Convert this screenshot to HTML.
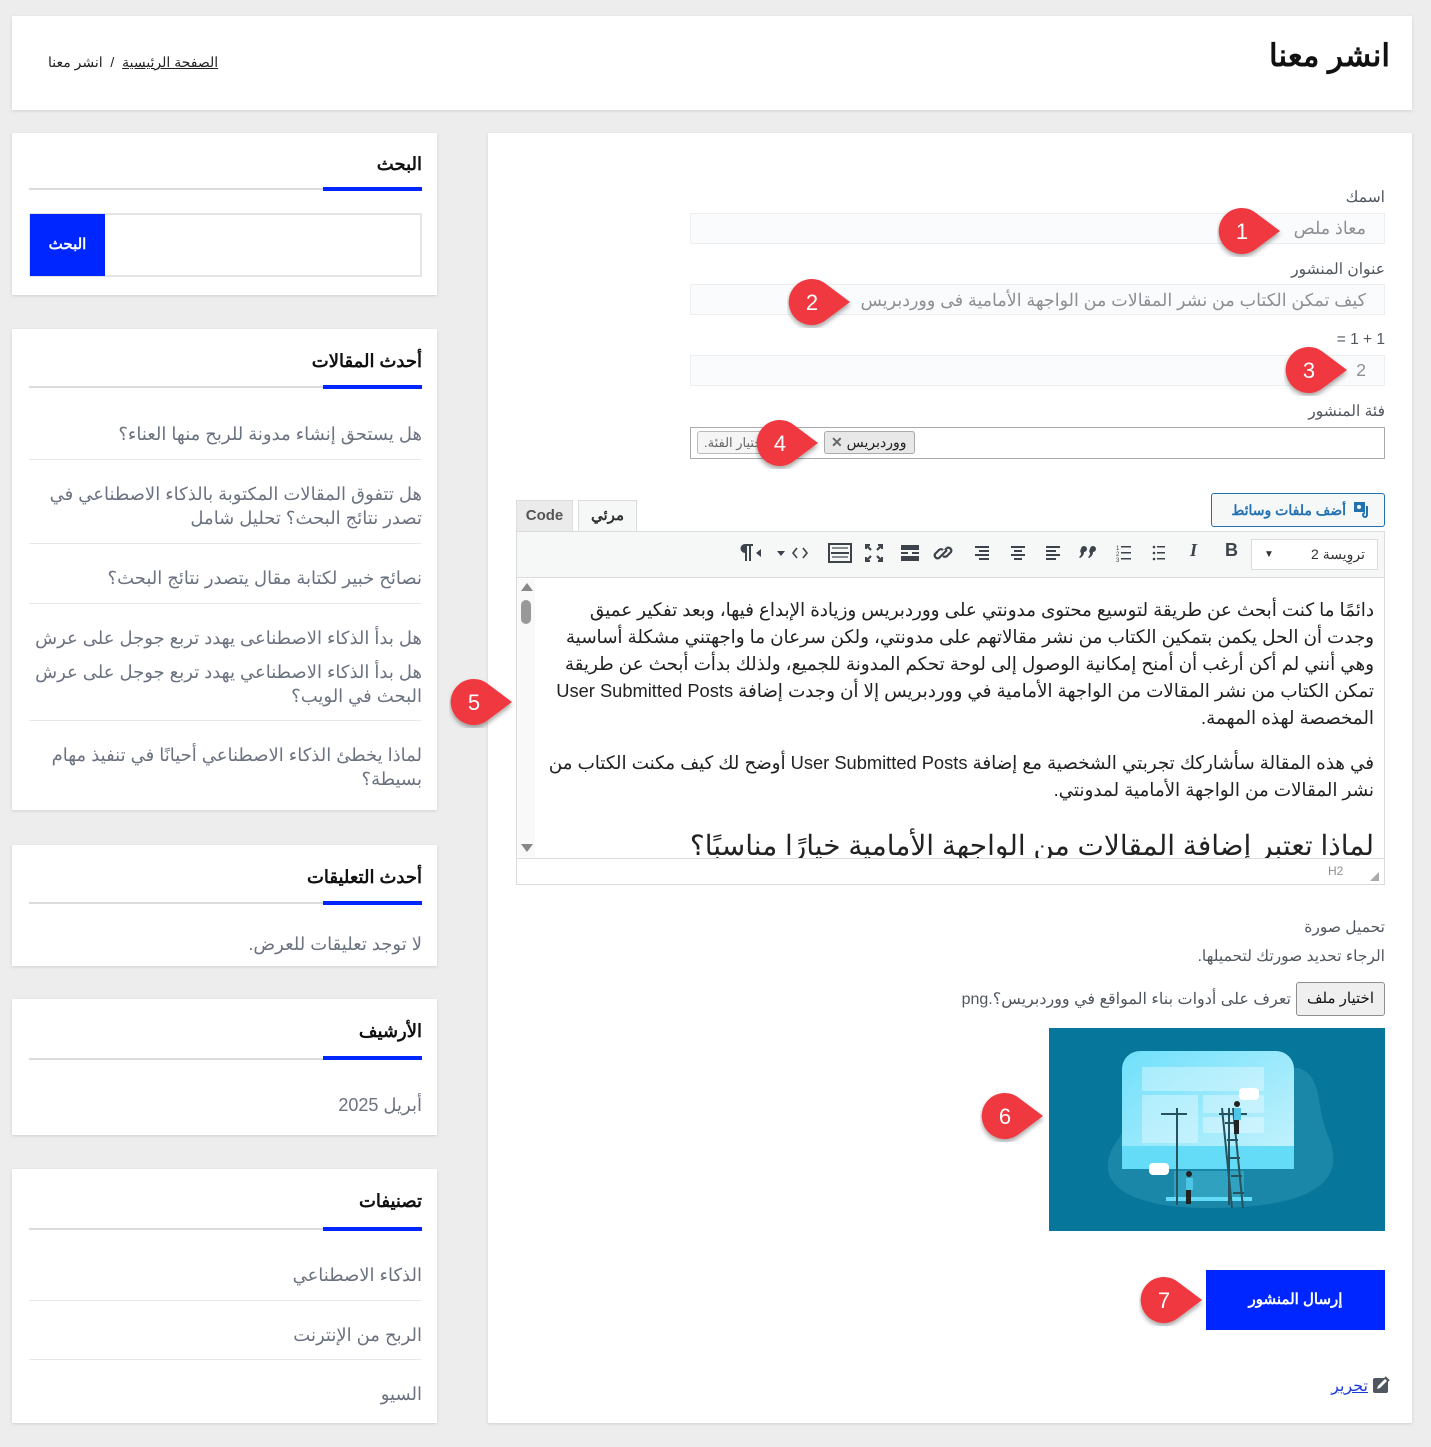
<!DOCTYPE html>
<html lang="ar"><head><meta charset="utf-8">
<style>
*{box-sizing:border-box;margin:0;padding:0}
body{width:1431px;height:1447px;background:#ededed;position:relative;overflow:hidden;font-family:"Liberation Sans","Noto Sans CJK SC",sans-serif;color:#1d2327}
.a{position:absolute}
.card{position:absolute;background:#fff;box-shadow:0 1px 3px rgba(0,0,0,.12)}
.r{position:absolute;direction:rtl;text-align:right;white-space:nowrap}
.st{font-weight:bold;font-size:18px;color:#111}
.gl{position:absolute;left:29px;width:392px;height:2px;background:#dcdcde}
.bl{position:absolute;left:311px;width:99px;height:4px;background:#0026ff}
.sep{position:absolute;left:29px;width:392px;height:1px;background:#e5e7eb}
.li{font-size:18px;color:#6b7280;line-height:24px}
.lab{font-size:15.5px;color:#50575e}
.inp{position:absolute;left:690px;width:695px;height:31px;background:#fafbfc;border:1px solid #eceef0}
.ph{font-size:17.5px;color:#8c8f94}
.badge{position:absolute;width:90px;height:52px}
.tb{position:absolute;top:540px;font-size:18px;color:#3c434a;font-weight:bold}
</style></head><body>

<div class="card" style="left:12px;top:16px;width:1400px;height:94px"></div>
<div class="r" style="right:41px;top:38px;font-size:31px;font-weight:bold;color:#111">انشر معنا</div>
<div class="r" style="left:48px;top:54px;font-size:14px;color:#222"><span style="text-decoration:underline">الصفحة الرئيسية</span>&nbsp; / &nbsp;انشر معنا</div>

<div class="card" style="left:12px;top:133px;width:425px;height:162px">
  <div class="r st" style="right:15px;top:21px">البحث</div>
  <div class="gl" style="left:17px;top:55px"></div><div class="bl" style="top:54px"></div>
  <div class="a" style="left:17px;top:80px;width:393px;height:64px;border:2px solid #e5e5e5"></div>
  <div class="a" style="left:18px;top:81px;width:75px;height:62px;background:#0026ff;color:#fff;font-weight:bold;font-size:15px;text-align:center;line-height:62px">البحث</div>
</div>

<div class="card" style="left:12px;top:329px;width:425px;height:481px">
  <div class="r st" style="right:15px;top:22px">أحدث المقالات</div>
  <div class="gl" style="left:17px;top:57px"></div><div class="bl" style="top:56px"></div>
  <div class="r li" style="right:15px;top:93px">هل يستحق إنشاء مدونة للربح منها العناء؟</div>
  <div class="sep" style="left:17px;top:130px"></div>
  <div class="r li" style="right:15px;top:153px">هل تتفوق المقالات المكتوبة بالذكاء الاصطناعي في<br>تصدر نتائج البحث؟ تحليل شامل</div>
  <div class="sep" style="left:17px;top:214px"></div>
  <div class="r li" style="right:15px;top:237px">نصائح خبير لكتابة مقال يتصدر نتائج البحث؟</div>
  <div class="sep" style="left:17px;top:274px"></div>
  <div class="r li" style="right:15px;top:297px">هل بدأ الذكاء الاصطناعى يهدد تربع جوجل على عرش</div>
  <div class="r li" style="right:15px;top:331px">هل بدأ الذكاء الاصطناعي يهدد تربع جوجل على عرش<br>البحث في الويب؟</div>
  <div class="sep" style="left:17px;top:391px"></div>
  <div class="r li" style="right:15px;top:414px">لماذا يخطئ الذكاء الاصطناعي أحيانًا في تنفيذ مهام<br>بسيطة؟</div>
</div>

<div class="card" style="left:12px;top:845px;width:425px;height:121px">
  <div class="r st" style="right:15px;top:22px">أحدث التعليقات</div>
  <div class="gl" style="left:17px;top:57px"></div><div class="bl" style="top:56px"></div>
  <div class="r li" style="right:15px;top:87px">لا توجد تعليقات للعرض.</div>
</div>

<div class="card" style="left:12px;top:999px;width:425px;height:136px">
  <div class="r st" style="right:15px;top:22px">الأرشيف</div>
  <div class="gl" style="left:17px;top:59px"></div><div class="bl" style="top:57px"></div>
  <div class="r li" style="right:15px;top:94px">أبريل 2025</div>
</div>

<div class="card" style="left:12px;top:1169px;width:425px;height:254px">
  <div class="r st" style="right:15px;top:22px">تصنيفات</div>
  <div class="gl" style="left:17px;top:59px"></div><div class="bl" style="top:58px"></div>
  <div class="r li" style="right:15px;top:94px">الذكاء الاصطناعي</div>
  <div class="sep" style="left:17px;top:131px"></div>
  <div class="r li" style="right:15px;top:154px">الربح من الإنترنت</div>
  <div class="sep" style="left:17px;top:190px"></div>
  <div class="r li" style="right:15px;top:213px">السيو</div>
</div>

<div class="card" style="left:488px;top:133px;width:924px;height:1290px"></div>

<div class="r lab" style="right:46px;top:188px">اسمك</div>
<div class="inp" style="top:213px"></div>
<div class="r ph" style="right:65px;top:218px">معاذ ملص</div>

<div class="r lab" style="right:46px;top:260px">عنوان المنشور</div>
<div class="inp" style="top:284px"></div>
<div class="r ph" style="right:65px;top:290px">كيف تمكن الكتاب من نشر المقالات من الواجهة الأمامية فى ووردبريس</div>

<div class="r lab" style="right:46px;top:331px">1 + 1 =</div>
<div class="inp" style="top:355px"></div>
<div class="r ph" style="right:65px;top:360px">2</div>

<div class="r lab" style="right:46px;top:402px">فئة المنشور</div>
<div class="a" style="left:690px;top:427px;width:695px;height:32px;border:1px solid #aaa;background:#fff"></div>
<div class="a" style="left:697px;top:431px;width:100px;height:23px;border:1px solid #bbb;border-radius:3px;background:#f5f5f5;font-size:13px;color:#666;direction:rtl;text-align:left;padding-left:6px;line-height:21px;overflow:hidden">اختيار الفئة.</div>
<div class="a" style="left:824px;top:431px;width:91px;height:23px;border:1px solid #aaa;border-radius:3px;background:#e8e8e8;font-size:14px;color:#222;line-height:21px;padding-left:6px"><span style="color:#666;font-weight:bold">✕</span> ووردبريس</div>

<div class="a" style="left:1211px;top:493px;width:174px;height:34px;border:1px solid #2271b1;border-radius:3px;background:#f6f7f7;color:#2271b1;font-weight:bold;font-size:14px;line-height:32px;direction:rtl;padding-right:12px;white-space:nowrap">
<svg width="20" height="18" viewBox="0 0 20 18" style="vertical-align:-3px;margin-left:6px"><rect x="2" y="2" width="11" height="10" fill="#2271b1"/><circle cx="7" cy="7" r="2" fill="#fff"/><path d="M15 6v9a2 2 0 1 1-2-2" stroke="#2271b1" stroke-width="2" fill="none"/></svg>أضف ملفات وسائط</div>

<div class="a" style="left:516px;top:500px;width:57px;height:32px;background:#ebebeb;border:1px solid #dcdcde;font-size:15px;font-weight:bold;color:#555;text-align:center;line-height:30px">Code</div>
<div class="a" style="left:578px;top:500px;width:59px;height:32px;background:#f6f7f7;border:1px solid #dcdcde;border-bottom:none;font-size:15px;font-weight:bold;color:#333;text-align:center;line-height:30px">مرئي</div>
<div class="a" style="left:516px;top:531px;width:869px;height:354px;border:1px solid #dcdcde;background:#fff"></div>
<div class="a" style="left:517px;top:532px;width:867px;height:46px;background:#f6f7f7;border-bottom:1px solid #dcdcde"></div>
<div class="a" style="left:1251px;top:539px;width:127px;height:31px;background:#fff;border:1px solid #dcdcde;font-size:14px;color:#333;direction:rtl;padding-right:12px;line-height:29px">تروِيسة 2<span style="position:absolute;left:12px;font-size:10px">▼</span></div>
<div class="tb" style="left:1225px">B</div>
<div class="tb" style="left:1190px;font-style:italic;font-family:'Liberation Serif',serif">I</div>
<svg class="a" style="left:735px;top:542px" width="430" height="22" viewBox="0 0 430 22" fill="#3c434a">
<path d="M6 2h12v2h-2v15h-2V4h-2v15h-2v-8a4.5 4.5 0 0 1 0-9z"/><path d="M26 7v8l-5-4z"/>
<path d="M42 9h8l-4 5z"/>
<path d="M62 6l-4 5 4 5M68 6l4 5-4 5" stroke="#3c434a" stroke-width="1.6" fill="none"/>
<rect x="94" y="2" width="22" height="18" fill="none" stroke="#3c434a" stroke-width="2"/><rect x="96" y="10" width="18" height="2"/><path d="M97 5h16v2H97zM97 14h16v2H97z" opacity=".6"/>
<path d="M131 3l5 5M147 3l-5 5M131 19l5-5M147 19l-5-5" stroke="#3c434a" stroke-width="2.2"/><path d="M130 2h5v2h-3v3h-2zM148 2h-5v2h3v3h2zM130 20h5v-2h-3v-3h-2zM148 20h-5v-2h3v-3h2z"/>
<rect x="166" y="3" width="18" height="5"/><rect x="166" y="10" width="7" height="2"/><rect x="177" y="10" width="7" height="2"/><rect x="166" y="14" width="18" height="5"/>
<path d="M206 14l-2 2a3 3 0 0 1-4-4l4-4a3 3 0 0 1 4 0M210 8l2-2a3 3 0 0 1 4 4l-4 4a3 3 0 0 1-4 0M205 15l7-7" stroke="#3c434a" stroke-width="2.2" fill="none"/>
<path d="M240 4h14v2h-14zM244 8h10v2h-10zM240 12h14v2h-14zM244 16h10v2h-10z"/>
<path d="M276 4h14v2h-14zM279 8h8v2h-8zM276 12h14v2h-14zM279 16h8v2h-8z"/>
<path d="M311 4h14v2h-14zM311 8h10v2h-10zM311 12h14v2h-14zM311 16h10v2h-10z"/>
<path d="M346 7a3 3 0 1 1 3 3c0 3-2 5-4 6l-1-1c2-1 2-3 2-4a3 3 0 0 1 0-4zM355 7a3 3 0 1 1 3 3c0 3-2 5-4 6l-1-1c2-1 2-3 2-4a3 3 0 0 1 0-4z"/>
<path d="M386 4h10v1.5h-10zM386 10h10v1.5h-10zM386 16h10v1.5h-10z"/><text x="381" y="8" font-size="6" font-family="Liberation Sans">1</text><text x="381" y="14" font-size="6" font-family="Liberation Sans">2</text><text x="381" y="20" font-size="6" font-family="Liberation Sans">3</text>
<path d="M422 4h10v1.5h-10zM422 10h10v1.5h-10zM422 16h10v1.5h-10z"/><circle cx="419" cy="5" r="1.3"/><circle cx="419" cy="11" r="1.3"/><circle cx="419" cy="17" r="1.3"/>
</svg>

<div class="a" style="left:517px;top:579px;width:18px;height:278px;background:#f9f9f9"></div>
<div class="a" style="left:521px;top:583px;width:0;height:0;border:6px solid transparent;border-bottom:8px solid #888;border-top:none"></div>
<div class="a" style="left:521px;top:600px;width:10px;height:24px;background:#999;border-radius:5px"></div>
<div class="a" style="left:521px;top:844px;width:0;height:0;border:6px solid transparent;border-top:8px solid #888;border-bottom:none"></div>

<div class="a" style="left:537px;top:596px;width:837px;direction:rtl;text-align:right;font-size:18.3px;line-height:27px;color:#222;white-space:nowrap;overflow:hidden">
<p>دائمًا ما كنت أبحث عن طريقة لتوسيع محتوى مدونتي على ووردبريس وزيادة الإبداع فيها، وبعد تفكير عميق<br>وجدت أن الحل يكمن بتمكين الكتاب من نشر مقالاتهم على مدونتي، ولكن سرعان ما واجهتني مشكلة أساسية<br>وهي أنني لم أكن أرغب أن أمنح إمكانية الوصول إلى لوحة تحكم المدونة للجميع، ولذلك بدأت أبحث عن طريقة<br>تمكن الكتاب من نشر المقالات من الواجهة الأمامية في ووردبريس إلا أن وجدت إضافة User Submitted Posts<br>المخصصة لهذه المهمة.</p>
<p style="margin-top:18px">في هذه المقالة سأشاركك تجربتي الشخصية مع إضافة User Submitted Posts أوضح لك كيف مكنت الكتاب من<br>نشر المقالات من الواجهة الأمامية لمدونتي.</p>
</div>
<div class="a" style="left:537px;top:826px;width:837px;height:32px;overflow:hidden;direction:rtl;text-align:right;font-size:28px;line-height:40px;color:#222;white-space:nowrap">لماذا تعتبر إضافة المقالات من الواجهة الأمامية خيارًا مناسبًا؟</div>
<div class="a" style="left:517px;top:858px;width:867px;height:1px;background:#dcdcde"></div>
<div class="a" style="left:1328px;top:864px;font-size:12px;color:#8c8f94">H2</div>
<div class="a" style="left:1370px;top:870px;font-size:9px;color:#aaa">◢</div>

<div class="r lab" style="right:46px;top:918px">تحميل صورة</div>
<div class="r lab" style="right:46px;top:947px">الرجاء تحديد صورتك لتحميلها.</div>
<div class="a" style="left:1296px;top:982px;width:89px;height:34px;border:1px solid #8f8f8f;border-radius:3px;background:#efefef;font-size:15px;color:#111;text-align:center;line-height:32px">اختيار ملف</div>
<div class="r lab" style="right:140px;top:989px;font-size:16px">تعرف على أدوات بناء المواقع في ووردبريس؟.png</div>

<svg class="a" style="left:1049px;top:1028px" width="336" height="203" viewBox="0 0 336 203">
<defs><linearGradient id="g" x1="0" y1="0" x2="1" y2="1"><stop offset="0" stop-color="#6fe0fb"/><stop offset="1" stop-color="#c9f3fd"/></linearGradient></defs>
<rect width="336" height="203" fill="#06769a"/>
<path d="M70 110c-30 40 0 70 90 70s140-20 120-70c-15-35-5-60-30-70H90c-15 20 0 40-20 70z" fill="#1a86a8"/>
<rect x="73" y="23" width="172" height="118" rx="18" fill="url(#g)"/>
<rect x="73" y="118" width="172" height="23" fill="#64dcf7"/>
<rect x="93" y="39" width="122" height="24" fill="#fff" opacity=".35"/>
<rect x="93" y="67" width="56" height="48" fill="#fff" opacity=".35"/>
<rect x="154" y="67" width="61" height="18" fill="#fff" opacity=".35"/>
<rect x="154" y="89" width="61" height="16" fill="#fff" opacity=".35"/>
<rect x="125" y="143" width="70" height="28" fill="#3fb5d1" opacity=".6"/>
<rect x="117" y="169" width="86" height="4" fill="#64dcf7"/>
<path d="M128 80v97M112 86h26M180 80v97M170 86h28" stroke="#27535f" stroke-width="2"/>
<path d="M173 80l10 100M184 80l10 100" stroke="#27535f" stroke-width="2"/>
<path d="M176 95h11M178 112h11M180 130h11M182 148h11M184 165h11" stroke="#27535f" stroke-width="2"/>
<rect x="185" y="80" width="7" height="12" fill="#4ec5e6"/><rect x="185" y="92" width="5" height="14" fill="#222"/>
<circle cx="188" cy="76" r="3" fill="#222"/>
<rect x="190" y="60" width="20" height="12" rx="4" fill="#fff"/>
<rect x="100" y="135" width="20" height="12" rx="4" fill="#fff"/>
<rect x="137" y="150" width="7" height="12" fill="#4ec5e6"/><rect x="137" y="162" width="5" height="14" fill="#222"/><circle cx="140" cy="146" r="3" fill="#222"/>
</svg>

<div class="a" style="left:1206px;top:1270px;width:179px;height:60px;background:#0026ff;color:#fff;font-weight:bold;font-size:15px;text-align:center;line-height:60px">إرسال المنشور</div>
<div class="r" style="right:41px;top:1376px;font-size:16px;color:#1a3bd9"><svg width="18" height="18" viewBox="0 0 18 18" style="vertical-align:-3px;margin-left:4px"><rect x="1" y="2" width="15" height="15" rx="2" fill="#50575e"/><path d="M5 13l1-3 7-7 2 2-7 7z" fill="#fff"/><path d="M13 1l4 4" stroke="#50575e" stroke-width="2"/></svg><span style="text-decoration:underline">تحرير</span></div>

<svg width="0" height="0" style="position:absolute"><defs><filter id="sh" x="-30%" y="-30%" width="160%" height="170%"><feDropShadow dx="0" dy="3" stdDeviation="2.5" flood-color="#000" flood-opacity=".35"/></filter></defs></svg>
<svg class="badge" style="left:1217px;top:205px" viewBox="0 0 90 52"><g filter="url(#sh)"><path d="M25 3a23 23 0 1 0 14 41l24-18-24-18A23 23 0 0 0 25 3z" fill="#f0393f"/></g><text x="25" y="34" font-size="22" fill="#fff" text-anchor="middle" font-family="Liberation Sans">1</text></svg>
<svg class="badge" style="left:787px;top:276px" viewBox="0 0 90 52"><g filter="url(#sh)"><path d="M25 3a23 23 0 1 0 14 41l24-18-24-18A23 23 0 0 0 25 3z" fill="#f0393f"/></g><text x="25" y="34" font-size="22" fill="#fff" text-anchor="middle" font-family="Liberation Sans">2</text></svg>
<svg class="badge" style="left:1284px;top:344px" viewBox="0 0 90 52"><g filter="url(#sh)"><path d="M25 3a23 23 0 1 0 14 41l24-18-24-18A23 23 0 0 0 25 3z" fill="#f0393f"/></g><text x="25" y="34" font-size="22" fill="#fff" text-anchor="middle" font-family="Liberation Sans">3</text></svg>
<svg class="badge" style="left:755px;top:417px" viewBox="0 0 90 52"><g filter="url(#sh)"><path d="M25 3a23 23 0 1 0 14 41l24-18-24-18A23 23 0 0 0 25 3z" fill="#f0393f"/></g><text x="25" y="34" font-size="22" fill="#fff" text-anchor="middle" font-family="Liberation Sans">4</text></svg>
<svg class="badge" style="left:449px;top:676px" viewBox="0 0 90 52"><g filter="url(#sh)"><path d="M25 3a23 23 0 1 0 14 41l24-18-24-18A23 23 0 0 0 25 3z" fill="#f0393f"/></g><text x="25" y="34" font-size="22" fill="#fff" text-anchor="middle" font-family="Liberation Sans">5</text></svg>
<svg class="badge" style="left:980px;top:1090px" viewBox="0 0 90 52"><g filter="url(#sh)"><path d="M25 3a23 23 0 1 0 14 41l24-18-24-18A23 23 0 0 0 25 3z" fill="#f0393f"/></g><text x="25" y="34" font-size="22" fill="#fff" text-anchor="middle" font-family="Liberation Sans">6</text></svg>
<svg class="badge" style="left:1139px;top:1274px" viewBox="0 0 90 52"><g filter="url(#sh)"><path d="M25 3a23 23 0 1 0 14 41l24-18-24-18A23 23 0 0 0 25 3z" fill="#f0393f"/></g><text x="25" y="34" font-size="22" fill="#fff" text-anchor="middle" font-family="Liberation Sans">7</text></svg>

</body></html>
